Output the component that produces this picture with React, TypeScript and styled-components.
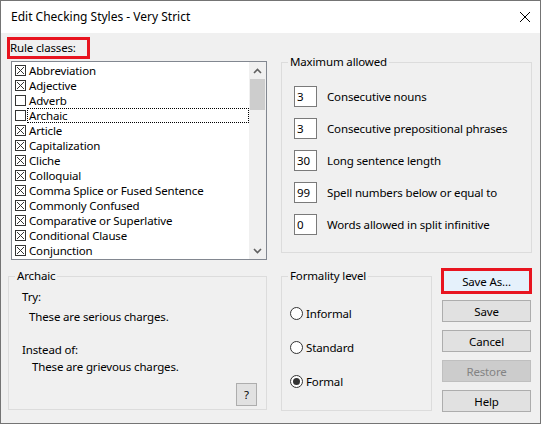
import React from "react";
import styled, { createGlobalStyle } from "styled-components";

const GlobalStyle = createGlobalStyle`
  html, body { margin: 0; padding: 0; background: #ffffff; }
  body {
    font-family: "Noto Sans", "Open Sans", "DejaVu Sans", sans-serif;
    font-size: 11.5px;
    letter-spacing: -0.15px;
    color: #000;
  }
  * { box-sizing: border-box; }
`;

const Window = styled.div`
  width: 541px;
  height: 424px;
  border: 1px solid #747474;
  display: flex;
  flex-direction: column;
  background: #f0f0f0;
`;

const TitleBar = styled.div`
  height: 32px;
  background: #ffffff;
  display: flex;
  align-items: center;
  justify-content: space-between;
  padding: 0 9px 0 10px;
  flex: none;
`;

const Title = styled.span`
  font-size: 12px;
  letter-spacing: 0;
  line-height: 16px;
`;

const Body = styled.div`
  flex: 1;
  display: flex;
  padding: 0 8px 0 7px;
`;

const LeftCol = styled.div`
  width: 259px;
  display: flex;
  flex-direction: column;
`;

const RightCol = styled.div`
  width: 251px;
  margin-left: 14px;
  display: flex;
  flex-direction: column;
`;

const Highlight = styled.div<{ $w: number }>`
  width: ${(p) => p.$w}px;
  height: 22px;
  border: 3px solid #e8141f;
  line-height: 16px;
  margin: 4px 0 0 -1px;
`;

const ListBox = styled.div`
  margin: 2px 0 0 3px;
  width: 256px;
  height: 199px;
  border: 1px solid #828790;
  background: #fff;
  display: flex;
`;

const Items = styled.div`
  flex: 1;
  padding-top: 1px;
  overflow: hidden;
`;

const Item = styled.div`
  height: 15px;
  display: flex;
  align-items: center;
  padding-left: 3px;
`;

const ItemText = styled.span<{ $focus?: boolean }>`
  flex: 1;
  height: 15px;
  line-height: 13px;
  padding-left: 1px;
  margin-left: 1px;
  border: 1px dotted ${(p) => (p.$focus ? "#000" : "transparent")};
  white-space: nowrap;
`;

const ScrollBar = styled.div`
  width: 17px;
  background: #f0f0f0;
  display: flex;
  flex-direction: column;
`;

const ScrollArrow = styled.div`
  height: 17px;
  display: flex;
  align-items: center;
  justify-content: center;
`;

const Thumb = styled.div`
  height: 31px;
  background: #cdcdcd;
  margin: 0 1px;
`;

const Track = styled.div`
  flex: 1;
`;

const Group = styled.fieldset<{ $w?: number; $h: number }>`
  margin: 0;
  padding: 0;
  border: 1px solid #dcdcdc;
  min-width: 0;
  ${(p) => (p.$w ? `width: ${p.$w}px;` : "")}
  height: ${(p) => p.$h}px;
`;

const Legend = styled.legend`
  margin-left: 6px;
  padding: 0 2px;
  line-height: 14px;
`;

const ArchaicGroup = styled(Group)`
  margin-top: 9px;
`;

const Para = styled.div<{ $x: number; $t: number }>`
  margin-left: ${(p) => p.$x}px;
  margin-top: ${(p) => p.$t}px;
  line-height: 15px;
`;

const HelpRow = styled.div`
  display: flex;
  justify-content: flex-end;
  padding-right: 9px;
  margin-top: 9px;
`;

const SmallButton = styled.button`
  width: 21px;
  height: 23px;
  padding: 0;
  border: 1px solid #adadad;
  background: #e1e1e1;
  font-family: inherit;
  font-size: 11.5px;
  color: #000;
`;

const MaxGroup = styled(Group)`
  margin-top: 22px;
`;

const Rows = styled.div`
  display: flex;
  flex-direction: column;
  gap: 11px;
  padding: 17px 0 0 12px;
`;

const Row = styled.div`
  display: flex;
  align-items: center;
`;

const NumBox = styled.div`
  width: 23px;
  height: 21px;
  border: 1px solid #7a7a7a;
  background: #fff;
  line-height: 19px;
  padding-left: 2px;
`;

const RowLabel = styled.span`
  margin-left: 10px;
`;

const BottomRow = styled.div`
  display: flex;
  margin-top: 16px;
`;

const Radios = styled.div`
  display: flex;
  flex-direction: column;
  gap: 19px;
  padding: 23px 0 0 8px;
`;

const RadioRow = styled.div`
  display: flex;
  align-items: center;
  height: 15px;
`;

const RadioCircle = styled.span<{ $on?: boolean }>`
  width: 13px;
  height: 13px;
  border-radius: 50%;
  border: 1px solid #333;
  background: #fff;
  display: flex;
  align-items: center;
  justify-content: center;
  margin-right: 3px;
  &::after {
    content: "";
    width: 7px;
    height: 7px;
    border-radius: 50%;
    background: #333;
    display: ${(p) => (p.$on ? "block" : "none")};
  }
`;

const Buttons = styled.div`
  display: flex;
  flex-direction: column;
  gap: 8px;
  margin: 1px 0 0 10px;
`;

const Button = styled.button<{ $variant?: "default" | "disabled" }>`
  position: relative;
  width: 89px;
  height: 22px;
  padding: 0;
  font-family: inherit;
  font-size: 11.5px;
  letter-spacing: -0.15px;
  border: 1px solid
    ${(p) =>
      p.$variant === "default"
        ? "#0078d7"
        : p.$variant === "disabled"
        ? "#bfbfbf"
        : "#adadad"};
  background: ${(p) =>
    p.$variant === "default"
      ? "#e5f1fb"
      : p.$variant === "disabled"
      ? "#cccccc"
      : "#e1e1e1"};
  color: ${(p) => (p.$variant === "disabled" ? "#838383" : "#000")};
`;

const RedMark = styled.span`
  position: absolute;
  left: -2px;
  right: -2px;
  top: -3px;
  bottom: -3px;
  border: 3px solid #e8141f;
  pointer-events: none;
`;

const CheckIcon = ({ on }: { on: boolean }) => (
  <svg width="11" height="11" viewBox="0 0 11 11" style={{ flex: "none" }}>
    <rect x="0.5" y="0.5" width="10" height="10" fill="#fff" stroke="#333" />
    {on && <path d="M2 2 L9 9 M9 2 L2 9" stroke="#333" strokeWidth="1" />}
  </svg>
);

const Chevron = ({ up }: { up?: boolean }) => (
  <svg width="9" height="6" viewBox="0 0 9 6">
    <path
      d={up ? "M1 5 L4.5 1.5 L8 5" : "M1 1 L4.5 4.5 L8 1"}
      fill="none"
      stroke="#606060"
      strokeWidth="1.6"
    />
  </svg>
);

const CloseIcon = () => (
  <svg width="12" height="12" viewBox="0 0 12 12">
    <path d="M1 1 L11 11 M11 1 L1 11" stroke="#000" strokeWidth="1" />
  </svg>
);

const rules: [string, boolean][] = [
  ["Abbreviation", true],
  ["Adjective", true],
  ["Adverb", false],
  ["Archaic", false],
  ["Article", true],
  ["Capitalization", true],
  ["Cliche", true],
  ["Colloquial", true],
  ["Comma Splice or Fused Sentence", true],
  ["Commonly Confused", true],
  ["Comparative or Superlative", true],
  ["Conditional Clause", true],
  ["Conjunction", true],
];

const limits: [string, string][] = [
  ["3", "Consecutive nouns"],
  ["3", "Consecutive prepositional phrases"],
  ["30", "Long sentence length"],
  ["99", "Spell numbers below or equal to"],
  ["0", "Words allowed in split infinitive"],
];

export default function App() {
  return (
    <>
      <GlobalStyle />
      <Window>
        <TitleBar>
          <Title>Edit Checking Styles - Very Strict</Title>
          <CloseIcon />
        </TitleBar>
        <Body>
          <LeftCol>
            <Highlight $w={83}>Rule classes:</Highlight>
            <ListBox>
              <Items>
                {rules.map(([name, on]) => (
                  <Item key={name}>
                    <CheckIcon on={on} />
                    <ItemText $focus={name === "Archaic"}>{name}</ItemText>
                  </Item>
                ))}
              </Items>
              <ScrollBar>
                <ScrollArrow>
                  <Chevron up />
                </ScrollArrow>
                <Thumb />
                <Track />
                <ScrollArrow>
                  <Chevron />
                </ScrollArrow>
              </ScrollBar>
            </ListBox>
            <ArchaicGroup $h={141}>
              <Legend>Archaic</Legend>
              <Para $x={13} $t={6}>Try:</Para>
              <Para $x={20} $t={5}>These are serious charges.</Para>
              <Para $x={13} $t={18}>Instead of:</Para>
              <Para $x={23} $t={2}>These are grievous charges.</Para>
              <HelpRow>
                <SmallButton>?</SmallButton>
              </HelpRow>
            </ArchaicGroup>
          </LeftCol>
          <RightCol>
            <MaxGroup $h={198}>
              <Legend>Maximum allowed</Legend>
              <Rows>
                {limits.map(([v, label]) => (
                  <Row key={label}>
                    <NumBox>{v}</NumBox>
                    <RowLabel>{label}</RowLabel>
                  </Row>
                ))}
              </Rows>
            </MaxGroup>
            <BottomRow>
              <Group $w={151} $h={142}>
                <Legend>Formality level</Legend>
                <Radios>
                  <RadioRow>
                    <RadioCircle />
                    Informal
                  </RadioRow>
                  <RadioRow>
                    <RadioCircle />
                    Standard
                  </RadioRow>
                  <RadioRow>
                    <RadioCircle $on />
                    Formal
                  </RadioRow>
                </Radios>
              </Group>
              <Buttons>
                <Button $variant="default">
                  Save As...
                  <RedMark />
                </Button>
                <Button>Save</Button>
                <Button>Cancel</Button>
                <Button $variant="disabled">Restore</Button>
                <Button>Help</Button>
              </Buttons>
            </BottomRow>
          </RightCol>
        </Body>
      </Window>
    </>
  );
}
